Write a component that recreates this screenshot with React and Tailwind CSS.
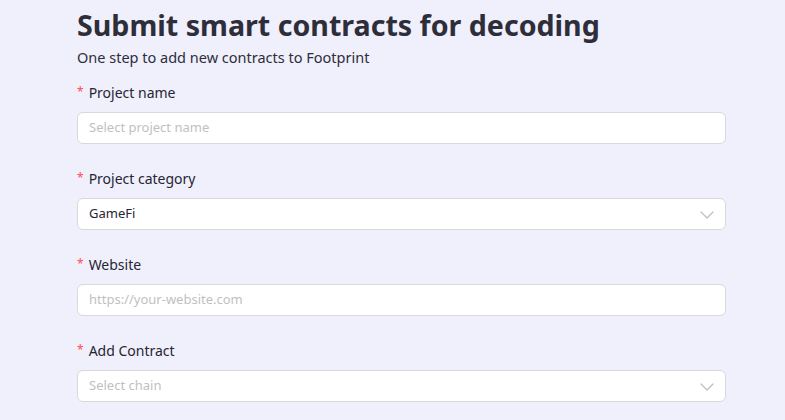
const FIELDS = [
  { label: 'Project name', placeholder: 'Select project name' },
  { label: 'Project category', value: 'GameFi', select: true },
  { label: 'Website', placeholder: 'https://your-website.com' },
  { label: 'Add Contract', placeholder: 'Select chain', select: true },
];

function Chevron() {
  return (
    <svg width="14" height="8" viewBox="0 0 14 8" fill="none" className="mt-[2px]">
      <path d="M1 1L7 7L13 1" stroke="#bdbdbd" strokeWidth="1.2" strokeLinecap="round" strokeLinejoin="round" />
    </svg>
  );
}

export default function App() {
  return (
    <div className="min-h-screen bg-[#f0effc] font-['Noto_Sans',sans-serif] overflow-hidden">
      <div className="w-[649px] ml-[77px] pt-[3px]">
        <h1 className="text-[28.6px] leading-[44px] font-bold text-[#2d2e3a]">
          Submit smart contracts for decoding
        </h1>
        <p className="text-[14.5px] leading-[20px] text-[#2d2e3a]">
          One step to add new contracts to Footprint
        </p>

        <div className="mt-[14px]">
          {FIELDS.map((f) => (
            <div key={f.label} className="h-[86px]">
              <label className="flex items-center h-[22px] text-[14px] text-[#262633]">
                <span className="text-[#ff4d4f] mr-[5px] text-[12px]">*</span>
                {f.label}
              </label>
              <div className="mt-[9px] h-[32px] bg-white border border-[#d9d9d9] rounded-[6px] flex items-center justify-between pl-[11px] pr-[11px]">
                <span className={`text-[13px] ${f.value ? 'text-[#262633]' : 'text-[#bfbfbf]'}`}>
                  {f.value || f.placeholder}
                </span>
                {f.select && <Chevron />}
              </div>
            </div>
          ))}
        </div>
      </div>
    </div>
  );
}
